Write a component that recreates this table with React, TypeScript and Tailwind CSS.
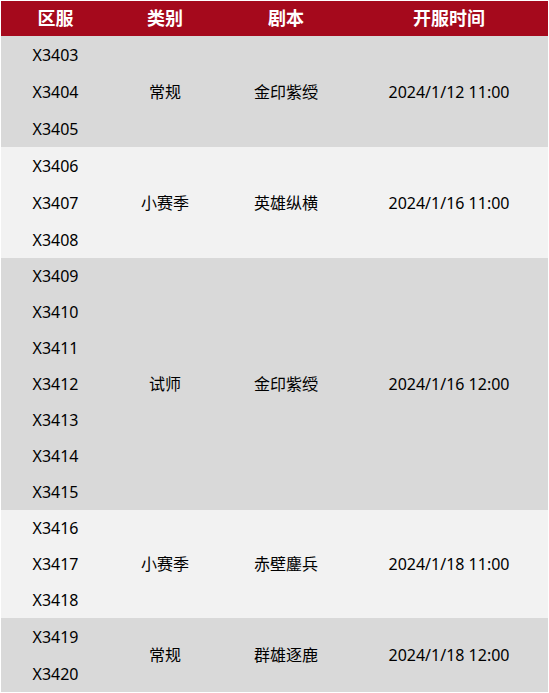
import React from 'react';

interface Group {
  servers: string[];
  type: string;
  script: string;
  time: string;
  rowH: string;
  bg: string;
}

const groups: Group[] = [
  { servers: ['X3403', 'X3404', 'X3405'], type: '常规', script: '金印紫绶', time: '2024/1/12 11:00', rowH: 'h-[37px]', bg: 'bg-[#d9d9d9]' },
  { servers: ['X3406', 'X3407', 'X3408'], type: '小赛季', script: '英雄纵横', time: '2024/1/16 11:00', rowH: 'h-[37px]', bg: 'bg-[#f2f2f2]' },
  { servers: ['X3409', 'X3410', 'X3411', 'X3412', 'X3413', 'X3414', 'X3415'], type: '试师', script: '金印紫绶', time: '2024/1/16 12:00', rowH: 'h-[36px]', bg: 'bg-[#d9d9d9]' },
  { servers: ['X3416', 'X3417', 'X3418'], type: '小赛季', script: '赤壁鏖兵', time: '2024/1/18 11:00', rowH: 'h-[36px]', bg: 'bg-[#f2f2f2]' },
  { servers: ['X3419', 'X3420'], type: '常规', script: '群雄逐鹿', time: '2024/1/18 12:00', rowH: 'h-[37px]', bg: 'bg-[#d9d9d9]' },
];

const App: React.FC = () => {
  return (
    <div
      className="w-[549px] h-[693px] overflow-hidden bg-white pt-px px-px text-[16px] text-black"
      style={{ fontFamily: '"Noto Sans", "Noto Sans CJK SC", sans-serif' }}
    >
      <div className="flex h-[35px] items-center bg-[#a5091c] text-[18px] font-bold text-white">
        <div className="w-[109px] text-center">区服</div>
        <div className="w-[110px] text-center">类别</div>
        <div className="w-[132px] text-center">剧本</div>
        <div className="flex-1 pr-[2px] text-center">开服时间</div>
      </div>
      {groups.map(g => (
        <div key={g.servers[0]} className={`flex ${g.bg}`}>
          <div className="w-[109px] flex flex-col">
            {g.servers.map(s => (
              <div key={s} className={`${g.rowH} flex items-center justify-center`}>{s}</div>
            ))}
          </div>
          <div className="w-[110px] flex items-center justify-center">{g.type}</div>
          <div className="w-[132px] flex items-center justify-center">{g.script}</div>
          <div className="flex-1 pr-[2px] flex items-center justify-center">{g.time}</div>
        </div>
      ))}
    </div>
  );
};

export default App;
